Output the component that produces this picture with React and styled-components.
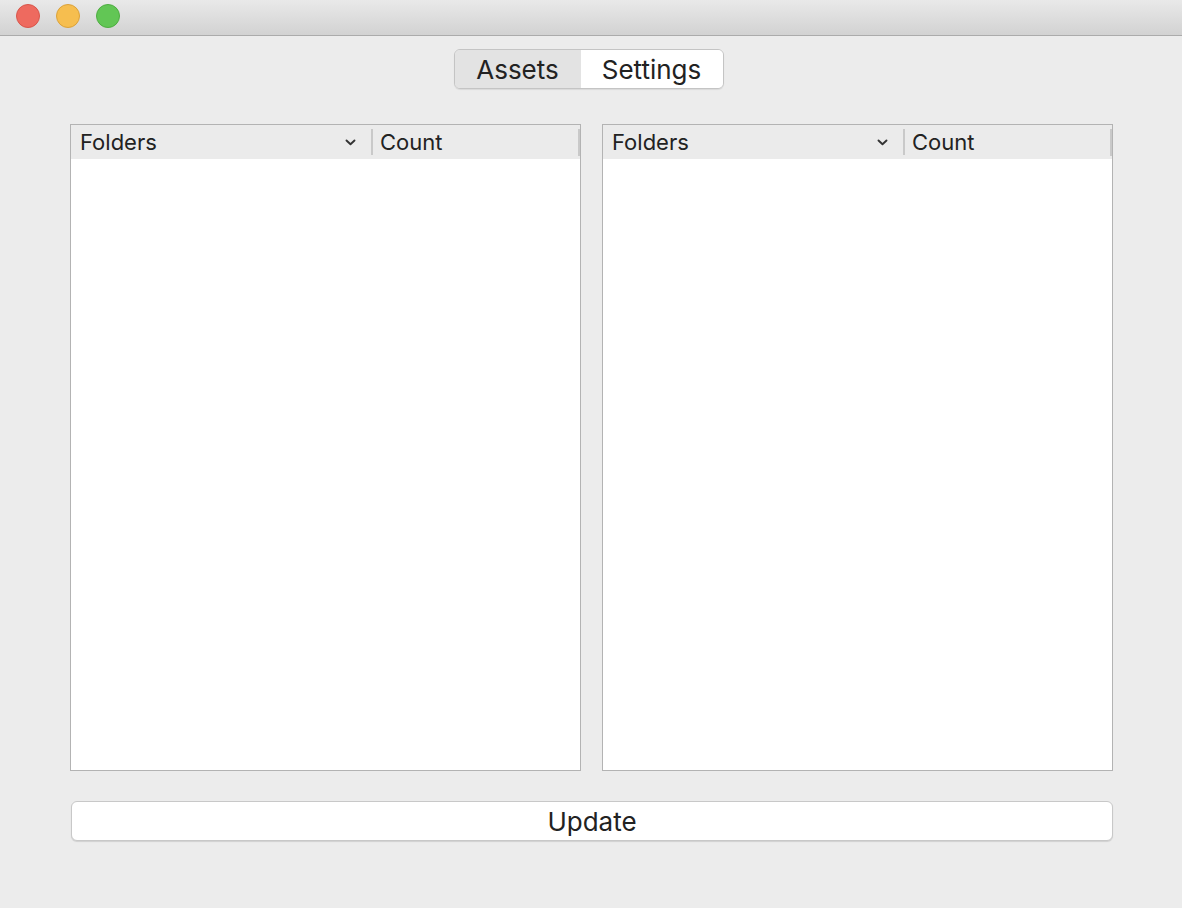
import React from "react";
import styled, { createGlobalStyle } from "styled-components";

const GlobalStyle = createGlobalStyle`
  html, body {
    margin: 0;
    padding: 0;
    background: #ececec;
    font-family: Inter, "Noto Sans", "Liberation Sans", sans-serif;
    color: #222;
  }
`;

const Window = styled.div`
  width: 1182px;
  height: 908px;
  display: flex;
  flex-direction: column;
  background: #ececec;
`;

const TitleBar = styled.header`
  height: 35px;
  flex: none;
  display: flex;
  align-items: center;
  gap: 16px;
  padding-left: 16px;
  background: linear-gradient(#e9e9e9, #d2d2d2);
  border-bottom: 1px solid #ababab;
`;

const Light = styled.span`
  width: 24px;
  height: 24px;
  margin-top: -4px;
  border-radius: 50%;
  box-sizing: border-box;
  background: ${(p) => p.color};
  border: 1px solid ${(p) => p.edge};
`;

const Content = styled.main`
  display: flex;
  flex-direction: column;
  align-items: center;
  padding: 13px 69px 0 70px;
`;

const Segmented = styled.div`
  display: flex;
  height: 40px;
  margin-right: 6px;
  box-sizing: border-box;
  border: 1px solid #c4c4c4;
  border-radius: 6px;
  overflow: hidden;
  box-shadow: 0 1px 1px rgba(0, 0, 0, 0.08);
`;

const Segment = styled.div`
  display: flex;
  align-items: center;
  justify-content: center;
  width: ${(p) => p.width}px;
  font-size: 26px;
  background: ${(p) => (p.active ? "#e3e3e3" : "#ffffff")};
  color: #222;
`;

const Tables = styled.div`
  display: grid;
  grid-template-columns: 511px 511px;
  gap: 21px;
  width: 100%;
  margin-top: 35px;
`;

const Table = styled.section`
  height: 647px;
  box-sizing: border-box;
  border: 1px solid #b3b3b3;
  background: #fff;
  display: flex;
  flex-direction: column;
`;

const HeaderRow = styled.div`
  height: 34px;
  flex: none;
  display: grid;
  grid-template-columns: 300px 1fr;
  background: #ebebeb;
  font-size: 22px;
`;

const HeaderCell = styled.div`
  display: flex;
  align-items: center;
  justify-content: space-between;
  padding: 0 15px 0 9px;
  position: relative;
  ${(p) =>
    p.divider &&
    `&:before {
      content: "";
      position: absolute;
      left: 0;
      top: 4px;
      bottom: 4px;
      width: 2px;
      background: #c9c9c9;
    }`}
  &:after {
    content: "";
    position: absolute;
    right: 0;
    top: 4px;
    bottom: 3px;
    width: 2px;
    background: ${(p) => (p.last ? "#c9c9c9" : "transparent")};
  }
`;

const Chevron = () => (
  <svg width="11" height="7" viewBox="0 0 11 7">
    <path d="M1.5 1.5 L5.5 5.2 L9.5 1.5" fill="none" stroke="#333" strokeWidth="1.9" strokeLinecap="round" strokeLinejoin="round" />
  </svg>
);

const UpdateButton = styled.button`
  align-self: flex-end;
  width: 1042px;
  height: 40px;
  margin-top: 30px;
  box-sizing: border-box;
  background: #fff;
  border: 1px solid #c8c8c8;
  border-radius: 6px;
  box-shadow: 0 1px 1px rgba(0, 0, 0, 0.12);
  font-family: inherit;
  font-size: 26px;
  color: #222;
  padding: 0;
`;

const FolderTable = () => (
  <Table>
    <HeaderRow>
      <HeaderCell>
        Folders
        <Chevron />
      </HeaderCell>
      <HeaderCell divider last>
        Count
      </HeaderCell>
    </HeaderRow>
  </Table>
);

export default function App() {
  return (
    <>
      <GlobalStyle />
      <Window>
        <TitleBar>
          <Light color="#ee6a5f" edge="#d8564b" />
          <Light color="#f6be4f" edge="#dba23a" />
          <Light color="#62c655" edge="#4ead41" />
        </TitleBar>
        <Content>
          <Segmented>
            <Segment width={126} active>Assets</Segment>
            <Segment width={142}>Settings</Segment>
          </Segmented>
          <Tables>
            <FolderTable />
            <FolderTable />
          </Tables>
          <UpdateButton>Update</UpdateButton>
        </Content>
      </Window>
    </>
  );
}
